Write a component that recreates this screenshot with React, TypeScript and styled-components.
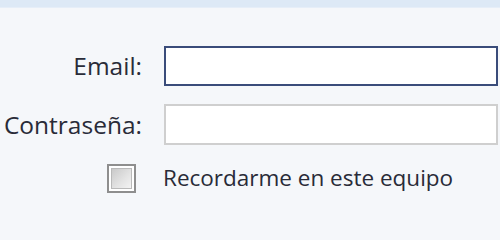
import styled, { createGlobalStyle } from "styled-components";

const GlobalStyle = createGlobalStyle`
	html, body {
		margin: 0;
		padding: 0;
		background-color: #f5f7fa;
	}
	* {
		box-sizing: border-box;
	}
`;

const Wrapper = styled.div`
	width: 500px;
	height: 220px;
	overflow: hidden;
	background-color: #f5f7fa;
	font-family: "Open Sans", "Noto Sans", sans-serif;
	color: #292b38;
`;

const TopStrip = styled.div`
	height: 8px;
	background-color: #dde9f6;
	border-bottom: 1px solid #e6eef8;
`;

const Form = styled.form`
	display: grid;
	grid-template-columns: 142px 334px;
	column-gap: 22px;
	row-gap: 18px;
	padding-top: 38px;
	align-items: center;
`;

const Label = styled.label`
	justify-self: end;
	font-size: 24.5px;
	line-height: 40px;
	white-space: nowrap;
`;

const Field = styled.input<{ focused?: boolean }>`
	height: ${(props) => (props.focused ? "40px" : "41px")};
	width: 100%;
	background-color: #fff;
	border: 2px solid ${(props) => (props.focused ? "#3a4c7a" : "#cfcfcf")};
	outline: none;
	padding: 0 8px;
	font-family: inherit;
	font-size: 22px;
`;

const CheckBox = styled.span`
	justify-self: end;
	margin-right: 6px;
	width: 29px;
	height: 29px;
	border: 2px solid #8e8e8e;
	padding: 2px;
	background-color: #fff;
	display: flex;

	&::after {
		content: "";
		flex: 1;
		border: 1px solid #b9b9b9;
		background: linear-gradient(135deg, #c9c9c9 0%, #e2e2e2 55%, #f3f3f3 100%);
	}
`;

const CheckText = styled.span`
	font-size: 22.5px;
	line-height: 30px;
	white-space: nowrap;
	margin-left: -1px;
`;

export default function App() {
	return (
		<>
			<GlobalStyle />
			<Wrapper>
				<TopStrip />
				<Form>
					<Label htmlFor="email">Email:</Label>
					<Field id="email" type="text" focused />
					<Label htmlFor="pass">Contraseña:</Label>
					<Field id="pass" type="password" />
					<CheckBox />
					<CheckText>Recordarme en este equipo</CheckText>
				</Form>
			</Wrapper>
		</>
	);
}
